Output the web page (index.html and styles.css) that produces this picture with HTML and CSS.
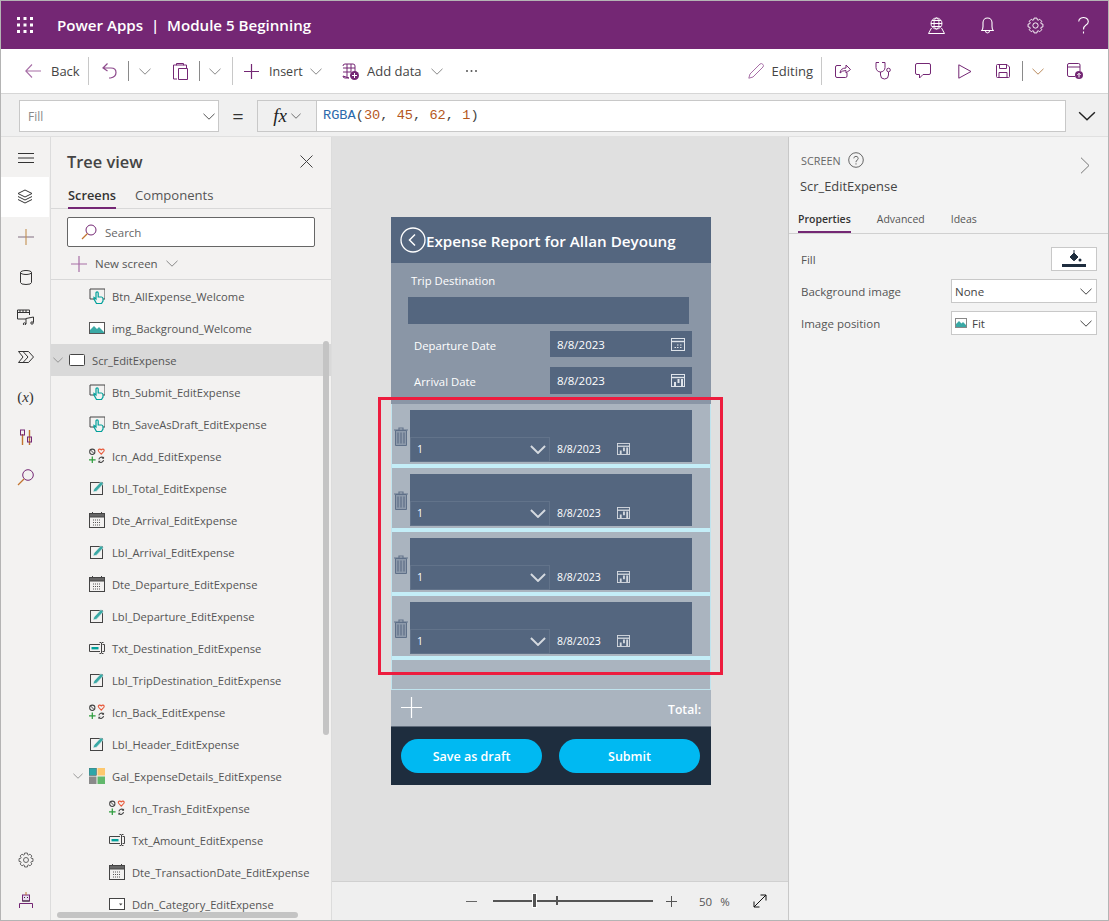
FILE: index.html
```html
<!DOCTYPE html>
<html lang="en">
<head>
    <meta charset="UTF-8">
    <meta name="viewport" content="width=device-width, initial-scale=1.0">
    <title>Power Apps | Module 5 Beginning</title>
    <link rel="stylesheet" href="styles.css">
</head>
<body>
<svg class="defs" width="0" height="0">
    <symbol id="chev" viewBox="0 0 12 7"><path d="M.5.8 6 6.2 11.5.8" fill="none" stroke="currentColor"/></symbol>
    <symbol id="gear" viewBox="-9 -9 18 18"><polygon fill="none" stroke="currentColor" points="-1.92,-5.9 -1.53,-7.85 1.53,-7.85 1.92,-5.9 2.81,-5.53 4.47,-6.63 6.63,-4.47 5.53,-2.81 5.9,-1.92 7.85,-1.53 7.85,1.53 5.9,1.92 5.53,2.81 6.63,4.47 4.47,6.63 2.81,5.53 1.92,5.9 1.53,7.85 -1.53,7.85 -1.92,5.9 -2.81,5.53 -4.47,6.63 -6.63,4.47 -5.53,2.81 -5.9,1.92 -7.85,1.53 -7.85,-1.53 -5.9,-1.92 -5.53,-2.81 -6.63,-4.47 -4.47,-6.63 -2.81,-5.53"/><circle r="2.8" fill="none" stroke="currentColor"/></symbol>
    <symbol id="i-btn" viewBox="0 0 16 16"><path d="M6 11H1V1h15v10h-2" fill="none" stroke="#444"/><path d="M7.5 15.5 5 11V9.500l2 1.500V5a1 1 0 0 1 2.200 0v4h3.300q1.500 0 1.500 2v2l-1.500 2.500z" fill="#f3f2f1" stroke="#00a09a" stroke-width="1.2"/></symbol>
    <symbol id="i-img" viewBox="0 0 16 12"><rect x=".5" y=".5" width="15" height="11" fill="#fff" stroke="#555"/><path d="M1 11V8l4-4 3 3 2-2 5 5v1z" fill="#3aa9a5"/></symbol>
    <symbol id="i-icons" viewBox="0 0 17 16"><circle cx="3.5" cy="3.5" r="2.8" fill="none" stroke="#444" stroke-width="1.1"/><path d="M1.5 1.500l4 4" stroke="#444"/><path d="M13 6 10.200 3q-.9-1.800.8-2.300 1.200-.2 2 .8.800-1 2-.8 1.700.5.800 2.300z" fill="none" stroke="#e8593a" stroke-width="1.2"/><path d="M0 12h7M3.500 8.500v7" stroke="#2c9c3c" stroke-width="1.3"/><path d="M10.500 11.500a3 3 0 0 1 5-1.500M15.500 12.500a3 3 0 0 1-5 1.500" fill="none" stroke="#444" stroke-width="1.2"/><path d="M16 8.500v2.500h-2.500M10 15.500V13h2.500" fill="#444"/></symbol>
    <symbol id="i-lbl" viewBox="0 0 16 16"><rect x="1.500" y="2.500" width="12" height="12" fill="none" stroke="#444"/><path d="M4 12l1-3 7-7.500 2.500 2.200-7 7.500z" fill="#3aa9a5" stroke="#f3f2f1" stroke-width=".6"/></symbol>
    <symbol id="i-date" viewBox="0 0 16 16"><rect x=".5" y="1.5" width="15" height="14" fill="none" stroke="#444"/><path d="M.5 1.500h15V5H.5zM3.500 0v2M12.500 0v2" fill="#666" stroke="#444"/><path d="M4 8h8M4 10.500h8M4 13h8" stroke="#555" stroke-dasharray="1 1"/></symbol>
    <symbol id="i-txt" viewBox="0 0 16 12"><path d="M11 2.500H.5v7H11M13.500 2.500h2v7h-2" fill="none" stroke="#444"/><rect x="2.5" y="5" width="7" height="2.4" fill="#00a09a"/><path d="M10.500.5h1.500l.5.500.5-.5h1.500M10.500 11.500H12l.5-.5.500.5h1.500M12.500 1v10" fill="none" stroke="#444"/></symbol>
    <symbol id="i-gal" viewBox="0 0 16 16"><rect width="7.5" height="7.5" fill="#2fa6a8" stroke="#555" stroke-width=".5"/><rect x="8.5" width="7.5" height="7.5" fill="#fdc86e"/><rect y="8.5" width="7.5" height="7.5" fill="#8a8a8a"/><rect x="8.5" y="8.5" width="7.5" height="7.5" fill="#62b86c"/></symbol>
    <symbol id="i-scr" viewBox="0 0 16 12"><rect x=".5" y=".5" width="15" height="11" rx="1" fill="#fff" stroke="#444"/></symbol>
    <symbol id="i-ddn" viewBox="0 0 16 12"><rect x=".5" y=".5" width="15" height="11" fill="#fff" stroke="#444"/><path d="M10 5.500h3.500L11.750 7.500z" fill="#444"/></symbol>
    <symbol id="i-cal" viewBox="0 0 14 13"><rect x=".5" y=".5" width="13" height="12" fill="none" stroke="currentColor"/><path d="M.5 3.500h13" stroke="currentColor" stroke-width="1.4"/><path d="M6 7h1.500M9 7h1.500M3.500 9.500H5M6 9.500h1.500M9 9.500h1.500" stroke="currentColor"/></symbol>
    <symbol id="i-cal2" viewBox="0 0 14 13"><rect x=".5" y=".5" width="13" height="12" fill="none" stroke="currentColor"/><path d="M.5 3.500h13" stroke="currentColor" stroke-width="1.4"/><path d="M3 8h2v4H3zM6.500 5h2v4h-2zM10 5h2v7h-2z" fill="currentColor"/></symbol>
    <symbol id="i-trash" viewBox="0 0 14 19"><path d="M0 3h14M5 3V1h4v2" fill="none" stroke="#65758c" stroke-width="1.2"/><path d="M1.500 3.500h11V18.500h-11z" fill="#8d9aab" stroke="#5f7088"/><path d="M4 5.500v11M7 5.500v11M10 5.500v11" stroke="#5f7088" stroke-width="1.2"/></symbol>
</svg>

<div class="app">
    <header class="topbar">
        <svg class="waffle" width="16" height="16" viewBox="0 0 16 16" fill="#fff"><rect width="3" height="3"/><rect x="6.5" width="3" height="3"/><rect x="13" width="3" height="3"/><rect y="6.5" width="3" height="3"/><rect x="6.5" y="6.5" width="3" height="3"/><rect x="13" y="6.5" width="3" height="3"/><rect y="13" width="3" height="3"/><rect x="6.5" y="13" width="3" height="3"/><rect x="13" y="13" width="3" height="3"/></svg>
        <div class="app-title">Power Apps &nbsp;|&nbsp; Module 5 Beginning</div>
        <div class="top-icons">
            <svg width="17" height="17" viewBox="0 0 17 17" fill="none" stroke="#fff"><circle cx="8.500" cy="6.500" r="5.500"/><ellipse cx="8.500" cy="6.500" rx="2.500" ry="5.500"/><path d="M3 6.500h11M4 3.500h9M4 9.500h9M3.500 11 .5 16.500h16L13.500 11"/></svg>
            <svg class="ic-bell" width="13" height="17" viewBox="0 0 13 17" fill="none" stroke="#fff" stroke-width="1.1"><path d="M.7 13.500h11.600q-1.300-1.500-1.300-4V5.500a4.500 4.500 0 0 0-9 0v4q0 2.500-1.300 4zM4.500 14q.3 2 2 2t2-2"/></svg>
            <svg class="ic-gear" width="17" height="17"><use href="#gear"/></svg>
            <svg class="ic-help" width="11" height="17" viewBox="0 0 11 17" fill="none" stroke="#fff" stroke-width="1.1"><path d="M.7 4.500a4.800 4 0 1 1 7.300 3.500Q5.500 9.500 5.500 12.500M5.500 14.500v2"/></svg>
        </div>
    </header>

    <div class="toolbar">
        <div class="tb-btn tb-back">
            <svg class="ico" width="16" height="14" viewBox="0 0 16 14"><path d="M7 .5 .8 7 7 13.500M1 7h15" fill="none" stroke="#a76ea6" stroke-width="1.1"/></svg>
            <span>Back</span>
        </div>
        <i class="tb-sep tall"></i>
        <div class="tb-btn tb-undo">
            <svg class="ico" width="15" height="16" viewBox="0 0 15 16"><path d="M5.500.5 1 5l4.500 3M1.200 5H9q5 0 5 4.500T8.500 15H7" fill="none" stroke="#8d4a8c" stroke-width="1.2"/></svg>
        </div>
        <i class="tb-sep"></i>
        <div class="tb-chev"><svg width="12" height="7" class="chev-mute"><use href="#chev"/></svg></div>
        <div class="tb-btn tb-paste">
            <svg class="ico" width="15" height="18" viewBox="0 0 15 18" fill="none" stroke="#742774"><path d="M4 3H.5v14H4M10 3h3.500v3M3.500 3V1.500h7V3zM5.500 6.500h9v11h-9z"/></svg>
        </div>
        <i class="tb-sep"></i>
        <div class="tb-chev"><svg width="12" height="7" class="chev-mute"><use href="#chev"/></svg></div>
        <i class="tb-sep tall"></i>
        <div class="tb-btn tb-insert">
            <svg class="ico" width="15" height="15" viewBox="0 0 15 15"><path d="M7.500 0v15M0 7.500h15" stroke="#742774" stroke-width="1.2"/></svg>
            <span>Insert</span>
            <svg width="12" height="7" class="chev-mute"><use href="#chev"/></svg>
        </div>
        <div class="tb-btn tb-data">
            <svg class="ico" width="17" height="17" viewBox="0 0 17 17"><path d="M1 3q0-2 2-2h8q2 0 2 2v6M7 15H3q-2 0-2-2zM1 5h12M1 9h8M5 1v14M9 1v8" fill="none" stroke="#742774"/><circle cx="12.500" cy="12.500" r="4.500" fill="#742774"/><path d="M12.500 10v5M10 12.500h5" stroke="#fff"/></svg>
            <span>Add data</span>
            <svg width="12" height="7" class="chev-mute"><use href="#chev"/></svg>
        </div>
        <svg class="tb-dots" width="11" height="2" viewBox="0 0 11 2" fill="#555"><circle cx="1" cy="1" r="1"/><circle cx="5.500" cy="1" r="1"/><circle cx="10" cy="1" r="1"/></svg>

        <div class="tb-right">
            <svg class="ico" width="16" height="16" viewBox="0 0 16 16"><path d="M.8 15.200 2 11 12 1q1.500-1 2.800.3t.2 2.700L5 14z" fill="none" stroke="#a76ea6"/></svg>
            <span class="tb-editing">Editing</span>
            <i class="tb-sep tall"></i>
            <svg class="ico tr-share" width="16" height="16" viewBox="0 0 16 16" fill="none" stroke="#742774"><path d="M6 2.500H2q-1.500 0-1.500 1.500v9q0 1.500 1.500 1.500h8.500q1.500 0 1.500-1.500V10"/><path d="M5 10q.5-5 6-5V2l4.500 4.500L11 10V7.500Q7 7.500 5 10z"/></svg>
            <svg class="ico tr-steth" width="16" height="18" viewBox="0 0 16 18" fill="none" stroke="#742774"><path d="M4 .5H1v5a4.500 4.500 0 0 0 9 0v-5H7"/><path d="M5.500 10v3a4 4 0 0 0 8 0V10"/><circle cx="13.500" cy="8" r="1.800"/></svg>
            <svg class="ico tr-comment" width="16" height="16" viewBox="0 0 16 16" fill="none" stroke="#742774"><path d="M2 .5h12q1.500 0 1.500 1.500v8q0 1.500-1.500 1.500H8L4.500 15v-3.500H2Q.5 11.500.5 10V2Q.5.500 2 .5z"/></svg>
            <svg class="ico tr-play" width="14" height="15" viewBox="0 0 14 15" fill="none" stroke="#742774"><path d="M.8.800 13 7.500.8 14.200z"/></svg>
            <svg class="ico tr-save" width="14" height="14" viewBox="0 0 14 14" fill="none" stroke="#742774"><path d="M1.500.5h9.500l2.500 2.500v9.500q0 1-1 1h-11q-1 0-1-1v-11q0-1 1-1z"/><path d="M3.500.5v4h7v-4M3 13.500V8.500h8v5"/></svg>
            <i class="tb-sep tr-sep2"></i>
            <svg class="tr-chev chev-orange" width="12" height="7"><use href="#chev"/></svg>
            <svg class="ico tr-pub" width="16" height="16" viewBox="0 0 16 16"><path d="M8 13.500H2q-1.500 0-1.500-1.500V2Q.5.500 2 .5h9.500Q13 .5 13 2v6M.5 4h12.500" fill="none" stroke="#742774"/><circle cx="12" cy="12" r="4" fill="#742774"/><path d="M12 14.500v-4M10.300 12 12 10.300l1.700 1.700" fill="none" stroke="#fff"/></svg>
        </div>
    </div>

    <div class="formulabar">
        <div class="prop-select"><span>Fill</span><svg width="12" height="7"><use href="#chev"/></svg></div>
        <div class="equals">=</div>
        <div class="fx-btn"><em>fx</em><svg width="10" height="6"><use href="#chev"/></svg></div>
        <div class="formula"><span class="fn">RGBA</span>(<span class="num">30</span>, <span class="num">45</span>, <span class="num">62</span>, <span class="num">1</span>)</div>
        <div class="formula-expand"><svg width="18" height="10"><use href="#chev"/></svg></div>
    </div>

    <div class="main">
        <nav class="rail">
            <div class="rail-item rail-menu"><svg width="16" height="10" viewBox="0 0 16 10"><path d="M0 .5h16M0 5h16M0 9.500h16" stroke="#333"/></svg></div>
            <div class="rail-item active"><svg width="16" height="16" viewBox="0 0 16 16" fill="none" stroke="#333"><path d="M8 1 1 4.500 8 8l7-3.500zM1 7.500 8 11l7-3.500M1 10.500 8 14l7-3.500"/></svg></div>
            <div class="rail-item"><svg width="16" height="16" viewBox="0 0 16 16"><path d="M0 8h16" stroke="#8a7a8a" stroke-width="1.1"/><path d="M8 0v16" stroke="#c2904f" stroke-width="1.1"/></svg></div>
            <div class="rail-item"><svg width="12" height="15" viewBox="0 0 12 15" fill="none" stroke="#333"><ellipse cx="6" cy="2.500" rx="5.500" ry="2"/><path d="M.5 2.500v10q0 2 5.500 2t5.500-2v-10"/></svg></div>
            <div class="rail-item"><svg width="17" height="16" viewBox="0 0 17 16" fill="none" stroke="#333"><path d="M9 10H.5V1h12v5M.5 3.500h12M3 1v2.500M6 1v2.500M9 1v2.500"/><path d="M9 9.500 16.500 8v5.500M9 9.500V15"/><circle cx="7.500" cy="15" r="1.200"/><circle cx="15" cy="14" r="1.200"/></svg></div>
            <div class="rail-item"><svg width="16" height="12" viewBox="0 0 16 12" fill="none" stroke="#333"><path d="M.5.500h10l5 5.500-5 5.500H.5L5 6zM5 .5 10 6l-5 5.500"/></svg></div>
            <div class="rail-item"><span class="rail-var">(<em>x</em>)</span></div>
            <div class="rail-item"><svg width="14" height="17" viewBox="0 0 14 17" fill="none" stroke="#333"><path d="M3.500 5v11M10.500 1v15" stroke="#c2752f" stroke-width="1.4"/><rect x="1.5" y="1" width="4" height="5" stroke="#742774"/><rect x="8.5" y="8" width="4" height="5" stroke="#742774"/></svg></div>
            <div class="rail-item"><svg width="17" height="17" viewBox="0 0 17 17" fill="none" stroke="#742774"><circle cx="11" cy="6" r="5.300"/><path d="M7 10 1 16" stroke="#c2752f" stroke-width="1.3"/></svg></div>
            <div class="rail-spacer"></div>
            <div class="rail-item"><svg class="rail-gear" width="16" height="16"><use href="#gear"/></svg></div>
            <div class="rail-item"><svg width="14" height="16" viewBox="0 0 14 16" fill="none" stroke="#333"><rect x="3.500" y="3" width="7" height="6" fill="#e9dff0" stroke="#742774"/><path d="M7 0v3" stroke="#c2752f"/><path d="M.5 16v-4.500h13V16" stroke="#742774"/><path d="M5 5.500h1M8 5.500h1M3.500 9h7"/></svg></div>
        </nav>

        <aside class="tree">
            <div class="tree-head"><h2>Tree view</h2><svg width="13" height="13" viewBox="0 0 13 13"><path d="M.5.500l12 12M12.500.500l-12 12" stroke="#444"/></svg></div>
            <div class="tree-tabs"><span class="on">Screens</span><span>Components</span></div>
            <div class="tree-search">
                <svg width="16" height="16" viewBox="0 0 16 16" fill="none"><circle cx="10" cy="6" r="5" stroke="#742774"/><path d="M6.500 9.500 1 15" stroke="#c2752f" stroke-width="1.2"/></svg>
                <span>Search</span>
            </div>
            <div class="new-screen">
                <svg width="16" height="16" viewBox="0 0 16 16"><path d="M8 0v16M0 8h16" stroke="#a76ea6" stroke-width="1.2"/></svg>
                <span>New screen</span>
                <svg width="12" height="7" class="chev-mute"><use href="#chev"/></svg>
            </div>
            <ul class="tree-list">
                <li class="lv1"><svg class="t-ic"><use href="#i-btn"/></svg>Btn_AllExpense_Welcome</li>
                <li class="lv1"><svg class="t-ic"><use href="#i-img"/></svg>img_Background_Welcome</li>
                <li class="lv0 sel"><svg class="t-chev chev-mute"><use href="#chev"/></svg><svg class="t-ic"><use href="#i-scr"/></svg>Scr_EditExpense</li>
                <li class="lv1"><svg class="t-ic"><use href="#i-btn"/></svg>Btn_Submit_EditExpense</li>
                <li class="lv1"><svg class="t-ic"><use href="#i-btn"/></svg>Btn_SaveAsDraft_EditExpense</li>
                <li class="lv1"><svg class="t-ic"><use href="#i-icons"/></svg>Icn_Add_EditExpense</li>
                <li class="lv1"><svg class="t-ic"><use href="#i-lbl"/></svg>Lbl_Total_EditExpense</li>
                <li class="lv1"><svg class="t-ic"><use href="#i-date"/></svg>Dte_Arrival_EditExpense</li>
                <li class="lv1"><svg class="t-ic"><use href="#i-lbl"/></svg>Lbl_Arrival_EditExpense</li>
                <li class="lv1"><svg class="t-ic"><use href="#i-date"/></svg>Dte_Departure_EditExpense</li>
                <li class="lv1"><svg class="t-ic"><use href="#i-lbl"/></svg>Lbl_Departure_EditExpense</li>
                <li class="lv1"><svg class="t-ic"><use href="#i-txt"/></svg>Txt_Destination_EditExpense</li>
                <li class="lv1"><svg class="t-ic"><use href="#i-lbl"/></svg>Lbl_TripDestination_EditExpense</li>
                <li class="lv1"><svg class="t-ic"><use href="#i-icons"/></svg>Icn_Back_EditExpense</li>
                <li class="lv1"><svg class="t-ic"><use href="#i-lbl"/></svg>Lbl_Header_EditExpense</li>
                <li class="lv1"><svg class="t-chev chev-mute"><use href="#chev"/></svg><svg class="t-ic"><use href="#i-gal"/></svg>Gal_ExpenseDetails_EditExpense</li>
                <li class="lv2"><svg class="t-ic"><use href="#i-icons"/></svg>Icn_Trash_EditExpense</li>
                <li class="lv2"><svg class="t-ic"><use href="#i-txt"/></svg>Txt_Amount_EditExpense</li>
                <li class="lv2"><svg class="t-ic"><use href="#i-date"/></svg>Dte_TransactionDate_EditExpense</li>
                <li class="lv2"><svg class="t-ic"><use href="#i-ddn"/></svg>Ddn_Category_EditExpense</li>
            </ul>
            <div class="scroll-v"></div>
            <div class="scroll-h"></div>
        </aside>

        <section class="canvas">
            <div class="stage">
                <div class="phone">
                    <div class="ph-head">
                        <svg width="26" height="26" viewBox="0 0 26 26" fill="none" stroke="#fff" stroke-width="1.3"><circle cx="13" cy="13" r="12"/><path d="M15 7.500 9.500 13l5.500 5.500" stroke-width="1.5"/></svg>
                        <span>Expense Report for Allan Deyoung</span>
                    </div>
                    <div class="ph-form">
                        <div class="ph-label trip">Trip Destination</div>
                        <div class="ph-input"></div>
                        <div class="ph-line">
                            <span>Departure Date</span>
                            <div class="ph-date"><b>8/8/2023</b><svg width="14" height="13"><use href="#i-cal"/></svg></div>
                        </div>
                        <div class="ph-line">
                            <span>Arrival Date</span>
                            <div class="ph-date"><b>8/8/2023</b><svg width="14" height="13"><use href="#i-cal2"/></svg></div>
                        </div>
                    </div>
                    <div class="ph-gallery">
                        <div class="g-row">
                            <svg class="g-trash"><use href="#i-trash"/></svg>
                            <div class="g-card"><div class="g-amount"></div><div class="g-bottom">
                                <div class="g-drop"><span>1</span><svg width="16" height="9"><use href="#chev"/></svg></div>
                                <div class="g-date"><b>8/8/2023</b><svg width="13" height="12"><use href="#i-cal2"/></svg></div>
                            </div></div>
                        </div>
                        <div class="g-row">
                            <svg class="g-trash"><use href="#i-trash"/></svg>
                            <div class="g-card"><div class="g-amount"></div><div class="g-bottom">
                                <div class="g-drop"><span>1</span><svg width="16" height="9"><use href="#chev"/></svg></div>
                                <div class="g-date"><b>8/8/2023</b><svg width="13" height="12"><use href="#i-cal2"/></svg></div>
                            </div></div>
                        </div>
                        <div class="g-row">
                            <svg class="g-trash"><use href="#i-trash"/></svg>
                            <div class="g-card"><div class="g-amount"></div><div class="g-bottom">
                                <div class="g-drop"><span>1</span><svg width="16" height="9"><use href="#chev"/></svg></div>
                                <div class="g-date"><b>8/8/2023</b><svg width="13" height="12"><use href="#i-cal2"/></svg></div>
                            </div></div>
                        </div>
                        <div class="g-row">
                            <svg class="g-trash"><use href="#i-trash"/></svg>
                            <div class="g-card"><div class="g-amount"></div><div class="g-bottom">
                                <div class="g-drop"><span>1</span><svg width="16" height="9"><use href="#chev"/></svg></div>
                                <div class="g-date"><b>8/8/2023</b><svg width="13" height="12"><use href="#i-cal2"/></svg></div>
                            </div></div>
                        </div>
                    </div>
                    <div class="ph-total">
                        <svg width="21" height="21" viewBox="0 0 21 21"><path d="M10.500 0v21M0 10.500h21" stroke="#fff" stroke-width="1.2"/></svg>
                        <span>Total:</span>
                    </div>
                    <div class="ph-actions">
                        <div class="ph-btn">Save as draft</div>
                        <div class="ph-btn">Submit</div>
                    </div>
                    <div class="red-box"></div>
                </div>
            </div>
            <div class="zoombar">
                <svg width="11" height="1"><path d="M0 .5h11" stroke="#666"/></svg>
                <div class="slider"><i class="thumb"></i><i class="tick"></i></div>
                <svg width="11" height="11" viewBox="0 0 11 11"><path d="M5.500 0v11M0 5.500h11" stroke="#555"/></svg>
                <span class="zoom-val">50</span><span class="zoom-pct">%</span>
                <svg class="expand" width="14" height="14" viewBox="0 0 14 14" fill="none" stroke="#111"><path d="M1 13 13 1M7.500 1H13v5.500M1 7.500V13h5.500"/></svg>
            </div>
        </section>

        <aside class="props">
            <div class="p-top">
                <div>
                    <div class="p-kind">SCREEN
                        <svg width="16" height="16" viewBox="0 0 16 16" fill="none" stroke="#666"><circle cx="8" cy="8" r="7.300"/><path d="M5.800 6.300a2.200 2 0 1 1 3.300 1.800Q8 8.800 8 10.200M8 11.300v1.200"/></svg>
                    </div>
                    <div class="p-name">Scr_EditExpense</div>
                </div>
                <svg class="p-collapse" width="10" height="17" viewBox="0 0 10 17"><path d="M1 .7 9 8.500 1 16.300" fill="none" stroke="#777"/></svg>
            </div>
            <div class="p-tabs"><span class="on">Properties</span><span>Advanced</span><span>Ideas</span></div>
            <div class="p-row fill-row">
                <label>Fill</label>
                <div class="swatch"><svg width="26" height="20" viewBox="0 0 26 20"><path d="M9 8l4-4 4 4-3.500 3.500h-1z" fill="#1e2d3e" stroke="#1e2d3e"/><path d="M13 1v4" stroke="#1e2d3e"/><circle cx="19" cy="11" r="1.500" fill="#1e2d3e"/><rect x="1" y="15" width="24" height="3" fill="#1e2d3e"/></svg></div>
            </div>
            <div class="p-row">
                <label>Background image</label>
                <div class="p-select"><span>None</span><svg width="12" height="7"><use href="#chev"/></svg></div>
            </div>
            <div class="p-row">
                <label>Image position</label>
                <div class="p-select"><span class="with-ic"><svg width="12" height="10" viewBox="0 0 12 10"><rect x=".5" y=".5" width="11" height="9" fill="#fff" stroke="#888"/><path d="M1 9V6l3-3 2.500 2.500L8 4l3 3v2z" fill="#3aa9a5"/></svg>Fit</span><svg width="12" height="7"><use href="#chev"/></svg></div>
            </div>
        </aside>
    </div>
</div>
</body>
</html>
```

FILE: styles.css
```css
* {
    box-sizing: border-box;
}
html, body {
    margin: 0;
    padding: 0;
}
body {
    font-family: "Open Sans", "Noto Sans", Arial, sans-serif;
    color: #444;
    background: #fff;
}
svg {
    display: block;
    flex: none;
}
.defs {
    position: absolute;
}
.app {
    width: 1109px;
    height: 921px;
    border: 1px solid #b4b4b4;
    display: flex;
    flex-direction: column;
    overflow: hidden;
}
.chev-mute {
    color: #888;
}
.chev-orange {
    color: #b98a5c;
}

/* top purple bar */
.topbar {
    height: 48px;
    flex: none;
    background: #742774;
    display: flex;
    align-items: center;
    color: #fff;
    padding-left: 16px;
}
.app-title {
    margin-left: 24px;
    font-size: 15.1px;
    font-weight: 600;
}
.top-icons {
    margin-left: auto;
    display: flex;
    align-items: center;
    padding-right: 19px;
}
.ic-bell {
    margin-left: 36px;
}
.ic-gear {
    margin-left: 33px;
    color: #fff;
}
.ic-help {
    margin-left: 34px;
}

/* command bar */
.toolbar {
    height: 45px;
    flex: none;
    background: #fff;
    border-bottom: 1px solid #d6d6d6;
    display: flex;
    align-items: center;
    padding-left: 24px;
    font-size: 13px;
    color: #444;
}
.tb-btn {
    display: flex;
    align-items: center;
}
.tb-sep {
    display: block;
    width: 1px;
    height: 20px;
    background: #8a8a8a;
    flex: none;
}
.tb-sep.tall {
    height: 28px;
    background: #c8c8c8;
}
.tb-back {
    width: 63px;
    gap: 10px;
}
.tb-undo {
    width: 39px;
    padding-left: 13px;
}
.tb-chev {
    width: 44px;
    padding-left: 10px;
}
.tb-paste {
    width: 26px;
}
.tb-paste + .tb-sep + .tb-chev {
    width: 32px;
    padding-left: 9px;
}
.tb-insert {
    width: 109px;
    padding-left: 11px;
}
.tb-insert span {
    margin: 0 7px 0 10px;
    font-size: 12.5px;
}
.tb-data {
    width: 124px;
}
.tb-data span {
    margin: 0 9px 0 8px;
}
.tb-right {
    margin-left: auto;
    display: flex;
    align-items: center;
    padding-right: 25px;
}
.tb-editing {
    margin: 0 8px 0 8px;
}
.tr-share {
    margin-left: 13px;
}
.tr-steth {
    margin-left: 24px;
}
.tr-comment {
    margin-left: 24px;
}
.tr-play {
    margin-left: 27px;
}
.tr-save {
    margin-left: 24px;
}
.tr-sep2 {
    margin-left: 12px;
}
.tr-chev {
    margin-left: 9px;
}
.tr-pub {
    margin-left: 23px;
}

/* formula bar */
.formulabar {
    height: 43px;
    flex: none;
    background: #f0f0f0;
    display: flex;
    align-items: center;
    padding: 2px 0 0 18px;
    border-bottom: 1px solid #e0e0e0;
}
.prop-select {
    width: 200px;
    height: 32px;
    background: #fff;
    border: 1px solid #c8c8c8;
    display: flex;
    align-items: center;
    justify-content: space-between;
    padding: 0 3px 0 8px;
    font-size: 12px;
    color: #888;
}
.prop-select svg {
    color: #555;
}
.equals {
    width: 38px;
    text-align: center;
    font-size: 20px;
    color: #333;
}
.fx-btn {
    width: 60px;
    height: 32px;
    border: 1px solid #c8c8c8;
    display: flex;
    align-items: center;
    justify-content: center;
    gap: 4px;
    color: #555;
}
.fx-btn em {
    font-family: "Liberation Serif", serif;
    font-size: 19px;
    color: #222;
}
.formula {
    width: 749px;
    height: 32px;
    background: #fff;
    border: 1px solid #c8c8c8;
    border-left: 0;
    line-height: 30px;
    padding-left: 6px;
    font-family: "Liberation Mono", monospace;
    font-size: 13.65px;
    color: #444;
}
.fn {
    color: #2c69ab;
}
.num {
    color: #b5571c;
}
.formula-expand {
    flex: 1;
    display: flex;
    justify-content: center;
    color: #222;
}

/* main area */
.main {
    flex: 1;
    display: flex;
    min-height: 0;
}
.rail {
    width: 50px;
    flex: none;
    background: #f3f2f1;
    border-right: 1px solid #dcdcdc;
    display: flex;
    flex-direction: column;
}
.rail-item {
    height: 40px;
    flex: none;
    display: flex;
    align-items: center;
    justify-content: center;
}
.rail-menu {
    padding-top: 2px;
}
.rail-item.active {
    background: #fff;
    margin-right: 1px;
}
.rail-spacer {
    flex: 1;
}
.rail-gear {
    color: #555;
}
.rail-var {
    font-family: "Liberation Serif", serif;
    font-size: 15px;
    color: #333;
}

/* tree view */
.tree {
    width: 281px;
    flex: none;
    background: #f3f2f1;
    position: relative;
    overflow: hidden;
    border-right: 1px solid #dcdcdc;
}
.tree-head {
    height: 44px;
    display: flex;
    align-items: center;
    justify-content: space-between;
    padding: 4px 18px 0 16px;
}
.tree-head h2 {
    margin: 0;
    font-size: 16.4px;
    font-weight: 600;
    color: #444;
}
.tree-tabs {
    height: 27px;
    margin-top: 1px;
    display: flex;
    gap: 19px;
    padding-left: 17px;
    border-bottom: 1px solid #d8d8d8;
    font-size: 13.1px;
    line-height: 26px;
    color: #555;
}
.tree-tabs .on {
    color: #333;
    font-size: 12.8px;
    font-weight: 600;
    border-bottom: 2px solid #742774;
    height: 27px;
}
.tree-search {
    margin: 8px 0 0 16px;
    width: 248px;
    height: 30px;
    background: #fff;
    border: 1px solid #666;
    border-radius: 2px;
    display: flex;
    align-items: center;
    padding-left: 13px;
    gap: 8px;
    font-size: 11.5px;
    color: #666;
}
.new-screen {
    height: 33px;
    display: flex;
    align-items: center;
    padding: 1px 0 0 20px;
    font-size: 11.5px;
    color: #555;
    border-bottom: 1px solid #d8d8d8;
    gap: 8px;
}
.tree-list {
    list-style: none;
    margin: 0;
    padding: 0;
    font-size: 11.2px;
    color: #555;
}
.tree-list li {
    height: 32px;
    display: flex;
    align-items: center;
    white-space: nowrap;
    position: relative;
}
.t-ic {
    width: 16px;
    height: 16px;
    margin-right: 7px;
}
.t-chev {
    position: absolute;
    width: 10px;
    height: 6px;
}
.lv0 {
    padding-left: 18px;
}
.lv0 .t-chev {
    left: 2px;
}
.lv1 {
    padding-left: 38px;
}
.lv1 .t-chev {
    left: 22px;
}
.lv2 {
    padding-left: 58px;
}
.sel {
    background: #d9d9d9;
}
.scroll-v {
    position: absolute;
    left: 272px;
    top: 204px;
    width: 6px;
    height: 394px;
    border-radius: 3px;
    background: #c4c4c4;
}
.scroll-h {
    position: absolute;
    left: 6px;
    bottom: 2px;
    width: 241px;
    height: 6px;
    border-radius: 3px;
    background: #c4c4c4;
}

/* canvas */
.canvas {
    flex: 1;
    display: flex;
    flex-direction: column;
    background: #e0e0e0;
    min-width: 0;
}
.stage {
    flex: 1;
    padding: 80px 0 0 59px;
    min-height: 0;
}
.phone {
    width: 320px;
    height: 568px;
    position: relative;
    color: #fff;
    font-size: 11.3px;
    display: flex;
    flex-direction: column;
}
.ph-head {
    height: 46px;
    flex: none;
    background: #54667f;
    display: flex;
    align-items: center;
    padding-left: 9px;
    font-size: 15.2px;
    font-weight: 600;
}
.ph-head span {
    padding-top: 2px;
    white-space: nowrap;
}
.ph-form {
    height: 141px;
    flex: none;
    background: #8a96a6;
}
.ph-label.trip {
    padding: 10px 0 0 20px;
    height: 34px;
}
.ph-input {
    margin-left: 17px;
    width: 281px;
    height: 27px;
    background: #54667f;
}
.ph-line {
    display: flex;
    align-items: center;
    justify-content: space-between;
    padding: 0 19px 0 23px;
    margin-top: 7px;
    height: 26px;
}
.ph-line > span {
    padding-top: 2px;
}
.ph-line + .ph-line {
    margin-top: 10px;
    height: 27px;
}
.ph-date {
    width: 142px;
    height: 100%;
    background: #54667f;
    display: flex;
    align-items: center;
    justify-content: space-between;
    padding: 0 7px;
    color: #dfe4ea;
    font-size: 11.5px;
}
.ph-date b, .g-date b {
    font-weight: 400;
    color: #fff;
}
.ph-gallery {
    height: 286px;
    flex: none;
    background: #aab4bf;
    border: 1px solid #c0e4ee;
    border-top: 0;
}
.g-row {
    height: 64px;
    display: flex;
    align-items: flex-start;
    padding: 6px 0 0 2px;
    border-bottom: 4px solid #c4eef8;
}
.g-trash {
    width: 14px;
    height: 19px;
    margin-top: 17px;
    margin-right: 2px;
}
.g-card {
    width: 282px;
    height: 52px;
    background: #54667f;
}
.g-amount {
    height: 26px;
}
.g-bottom {
    height: 26px;
    display: flex;
    align-items: center;
    font-size: 10.5px;
}
.g-drop {
    width: 140px;
    height: 25px;
    border: 1px solid #62738a;
    display: flex;
    align-items: center;
    justify-content: space-between;
    padding: 0 3px 0 6px;
    color: #fff;
}
.g-drop svg {
    color: #d5dae0;
    stroke-width: 1.5;
}
.g-date {
    display: flex;
    align-items: center;
    padding-left: 7px;
    gap: 16px;
}
.g-date svg {
    color: #d5dae0;
}
.ph-total {
    height: 37px;
    flex: none;
    background: #aab4bf;
    border-bottom: 1px solid #5f6b7a;
    display: flex;
    align-items: center;
    justify-content: space-between;
    padding: 0 10px 2px;
    font-size: 12.2px;
    font-weight: 600;
}
.ph-total span {
    padding-top: 4px;
}
.ph-actions {
    flex: 1;
    background: #1e2d3e;
    display: flex;
    justify-content: space-between;
    padding: 12px 11px 0 10px;
}
.ph-btn {
    width: 141px;
    height: 34px;
    border-radius: 17px;
    background: #00b9f2;
    text-align: center;
    font-size: 12.5px;
    font-weight: 600;
    line-height: 36px;
}
.red-box {
    position: absolute;
    left: -13px;
    top: 180px;
    width: 345px;
    height: 278px;
    border: 3px solid #ed1c3e;
}
.zoombar {
    height: 39px;
    flex: none;
    background: #efefef;
    border-top: 1px solid #d0d0d0;
    display: flex;
    align-items: center;
    padding-left: 134px;
    font-size: 11.5px;
    color: #555;
}
.slider {
    width: 160px;
    height: 2px;
    margin: 0 13px 0 16px;
    background: #555;
    position: relative;
}
.thumb {
    position: absolute;
    left: 39px;
    top: -7px;
    width: 5px;
    height: 15px;
    background: #555;
    border: 1px solid #fff;
}
.tick {
    position: absolute;
    left: 63px;
    top: -4px;
    width: 2px;
    height: 9px;
    background: #555;
}
.zoom-val {
    margin-left: 22px;
}
.zoom-pct {
    margin-left: 8px;
}
.expand {
    margin-left: 23px;
}

/* properties */
.props {
    width: 320px;
    flex: none;
    background: #f3f3f3;
    border-left: 1px solid #c8c8c8;
    font-size: 11.5px;
    color: #555;
}
.p-top {
    height: 61px;
    display: flex;
    justify-content: space-between;
    padding: 15px 18px 0 11px;
}
.p-kind {
    display: flex;
    align-items: center;
    gap: 7px;
    padding-left: 1px;
    font-size: 10.8px;
    color: #666;
}
.p-name {
    margin-top: 9px;
    font-size: 12.9px;
    color: #444;
}
.p-collapse {
    margin-top: 5px;
}
.p-tabs {
    height: 36px;
    display: flex;
    gap: 26px;
    padding: 14px 0 0 9px;
    border-bottom: 1px solid #d0d0d0;
    font-size: 10.5px;
}
.p-tabs .on {
    font-weight: 600;
    color: #333;
    border-bottom: 2px solid #742774;
    height: 21px;
}
.p-row {
    height: 32px;
    display: flex;
    align-items: center;
    justify-content: space-between;
    padding: 0 11px 0 12px;
}
.fill-row {
    margin-top: 9px;
}
.swatch {
    width: 46px;
    height: 24px;
    background: #fff;
    border: 1px solid #c8c8c8;
    display: flex;
    align-items: center;
    justify-content: center;
}
.p-select {
    width: 146px;
    height: 24px;
    background: #fff;
    border: 1px solid #c8c8c8;
    display: flex;
    align-items: center;
    justify-content: space-between;
    padding: 0 4px 0 3px;
    color: #444;
}
.with-ic {
    display: flex;
    align-items: center;
    gap: 5px;
}
```
